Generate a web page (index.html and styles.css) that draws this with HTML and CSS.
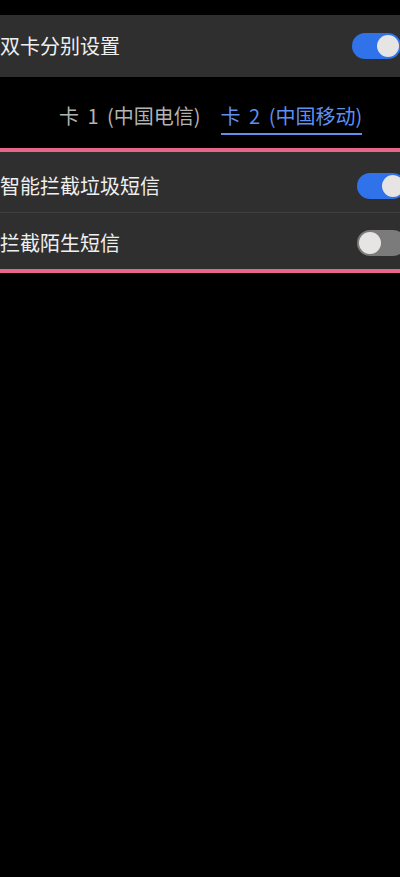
FILE: index.html
```html
<!DOCTYPE html>
<html lang="zh-CN">
<head>
<meta charset="utf-8">
<link rel="stylesheet" href="styles.css">
</head>
<body>
<div class="page">
  <div class="card card-top">
    <span class="label">双卡分别设置</span>
    <span class="switch on sw1"><span class="knob"></span></span>
  </div>
  <div class="tabs">
    <span class="tab">卡 1 (中国电信)</span>
    <span class="tab active">卡 2 (中国移动)</span>
  </div>
  <div class="highlight">
    <div class="row row1">
      <span class="label">智能拦截垃圾短信</span>
      <span class="switch on sw2"><span class="knob"></span></span>
    </div>
    <div class="divider"></div>
    <div class="row row2">
      <span class="label">拦截陌生短信</span>
      <span class="switch off sw2"><span class="knob"></span></span>
    </div>
  </div>
</div>
</body>
</html>
```
FILE: styles.css
```css
html, body {
  margin: 0;
  padding: 0;
  background: #000;
}
body {
  width: 400px;
  height: 877px;
  overflow: hidden;
  font-family: "Noto Sans CJK SC", "Noto Sans", sans-serif;
}
.page {
  padding-top: 15px;
}
.card {
  background: #2f2f2f;
  display: flex;
  align-items: center;
  justify-content: space-between;
}
.card-top {
  height: 62px;
}
.label {
  color: #efefef;
  font-size: 20px;
  line-height: 1;
}
.switch {
  position: relative;
  display: block;
  height: 26px;
  border-radius: 13px;
  width: 49px;
  flex: none;
}
.switch.on { background: #2f72e9; }
.switch.off { background: #7b7b7b; }
.knob {
  position: absolute;
  top: 2px;
  width: 22px;
  height: 22px;
  border-radius: 50%;
  background: #e7e4e4;
}
.switch.on .knob { right: 2px; }
.switch.off .knob { left: 2px; }
.sw1 { margin-right: -1px; }
.sw2 { margin-right: -6px; }
.tabs {
  height: 71px;
  display: flex;
  align-items: flex-start;
  padding-left: 59px;
  gap: 20px;
  box-sizing: border-box;
  padding-top: 29px;
}
.tab {
  font-size: 20px;
  line-height: 1;
  word-spacing: 4px;
  color: #b3b3b3;
  padding-bottom: 7px;
  white-space: nowrap;
}
.tab.active {
  color: #5f8ff0;
  border-bottom: 2.5px solid #5f8ff0;
}
.highlight {
  border-top: 4px solid #e8668b;
  border-bottom: 4px solid #e8668b;
  background: #2f2f2f;
}
.row {
  display: flex;
  align-items: center;
  justify-content: space-between;
  box-sizing: border-box;
}
.row1 {
  height: 60px;
  padding-top: 8px;
}
.row2 {
  height: 56px;
  padding-top: 3px;
}
.divider {
  height: 1px;
  background: #3f3f3f;
}
```
